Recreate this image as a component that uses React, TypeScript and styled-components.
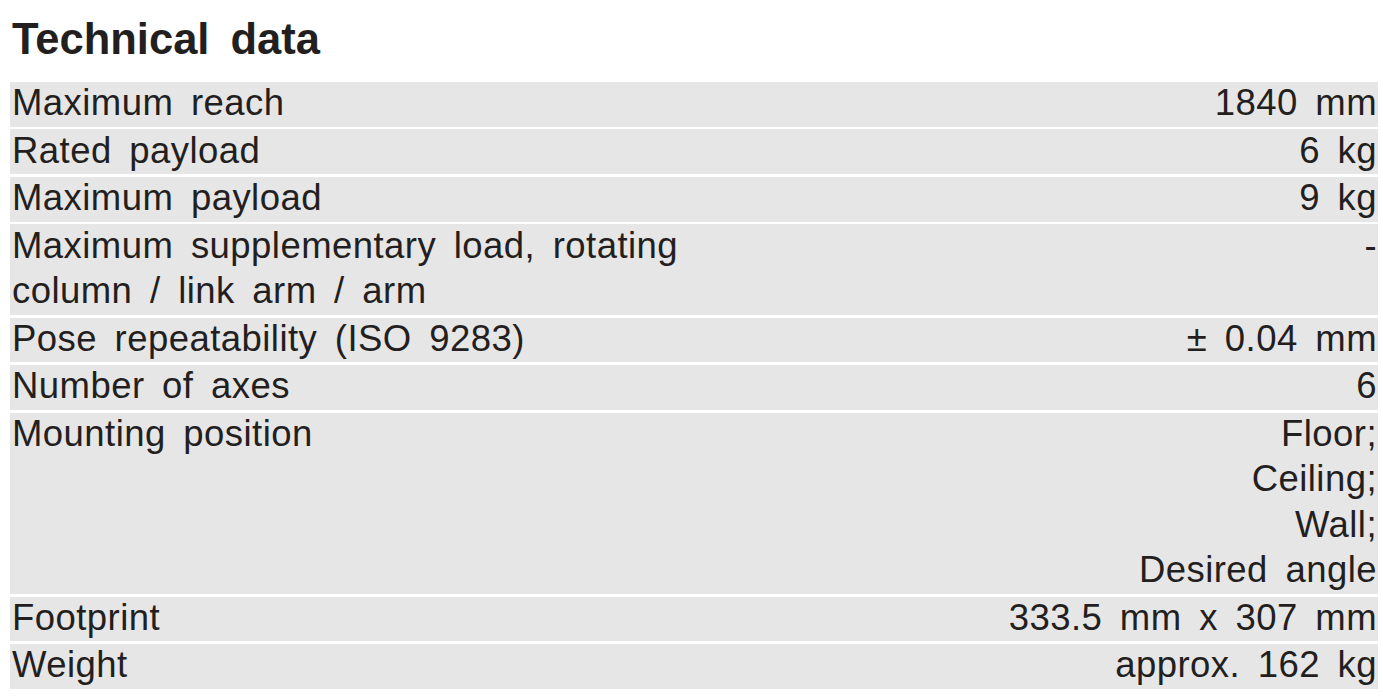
import React from "react";
import styled, { createGlobalStyle } from "styled-components";

const Global = createGlobalStyle`
  html, body { margin: 0; padding: 0; background: #ffffff; }
  body { font-family: "Liberation Sans", Arial, sans-serif; color: #231f20; }
`;

const Page = styled.div`
  padding: 15px 5px 0 10px;
`;

const Title = styled.h1`
  margin: 0 0 19px 0;
  padding-left: 2px;
  font-size: 43.5px;
  line-height: 48px;
  font-weight: 700;
  word-spacing: 9px;
  color: #231f20;
`;

const Table = styled.div`
  display: flex;
  flex-direction: column;
  gap: 2.8px;
`;

const Row = styled.div`
  display: grid;
  grid-template-columns: 1fr 1fr;
  background: #e7e6e6;
  font-size: 36.5px;
  letter-spacing: 0.45px;
  line-height: 45.6px;
  word-spacing: 7px;
`;

const Cell = styled.div`
  margin: -1.8px 0 0.9px 0;
`;

const Label = styled(Cell)`
  padding-left: 2px;
`;

const Value = styled(Cell)`
  text-align: right;
  padding-right: 1px;
`;

const rows: { label: string; value: React.ReactNode }[] = [
  { label: "Maximum reach", value: "1840 mm" },
  { label: "Rated payload", value: "6 kg" },
  { label: "Maximum payload", value: "9 kg" },
  { label: "Maximum supplementary load, rotating column / link arm / arm", value: "-" },
  { label: "Pose repeatability (ISO 9283)", value: "± 0.04 mm" },
  { label: "Number of axes", value: "6" },
  {
    label: "Mounting position",
    value: (
      <>
        Floor;
        <br />
        Ceiling;
        <br />
        Wall;
        <br />
        Desired angle
      </>
    ),
  },
  { label: "Footprint", value: "333.5 mm x 307 mm" },
  { label: "Weight", value: "approx. 162 kg" },
];

export default function App() {
  return (
    <>
      <Global />
      <Page>
        <Title>Technical data</Title>
        <Table>
          {rows.map((r) => (
            <Row key={r.label}>
              <Label>{r.label}</Label>
              <Value>{r.value}</Value>
            </Row>
          ))}
        </Table>
      </Page>
    </>
  );
}
